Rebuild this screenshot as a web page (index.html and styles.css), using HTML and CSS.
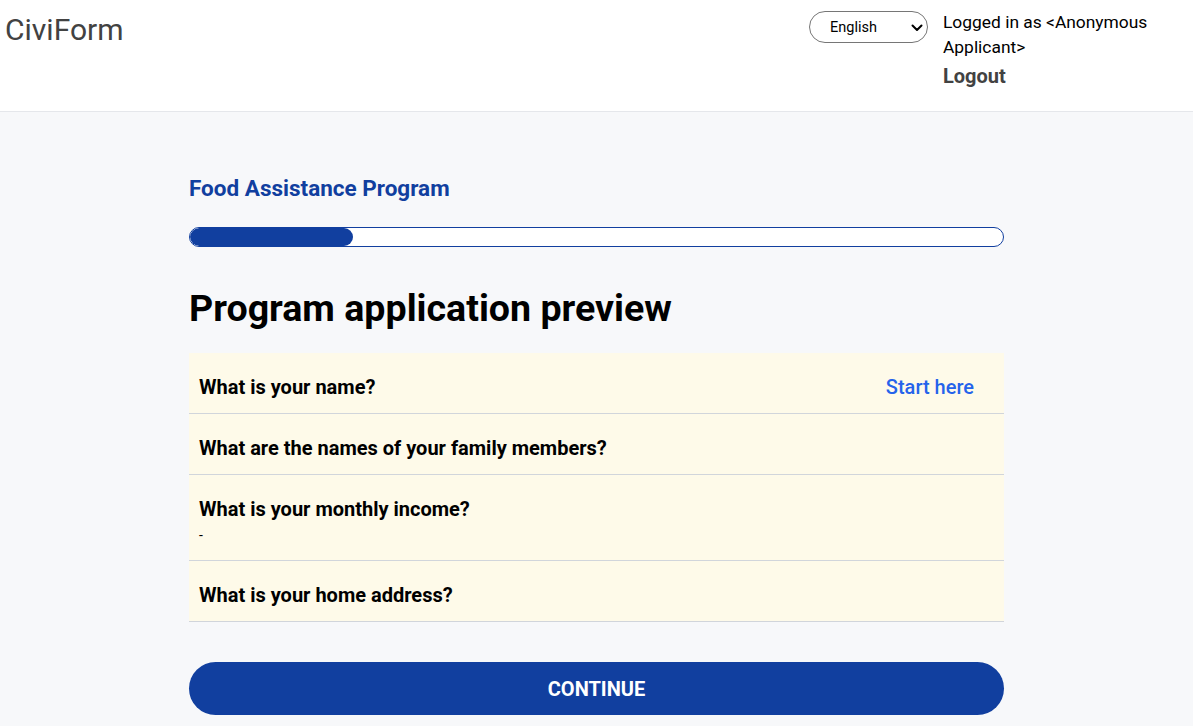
FILE: index.html
```html
<!DOCTYPE html>
<html lang="en">
<head>
<meta charset="utf-8">
<title>CiviForm</title>
<link rel="stylesheet" href="styles.css">
</head>
<body>
<header class="topbar">
  <div class="brand">CiviForm</div>
  <div class="topbar-right">
    <div class="lang">
      <span class="lang-label">English</span>
      <svg class="lang-chev" width="12" height="8" viewBox="0 0 12 8"><path d="M1.5 1.5 L6 6 L10.5 1.5" fill="none" stroke="#000" stroke-width="2" stroke-linecap="round" stroke-linejoin="round"/></svg>
    </div>
    <div class="user">
      <div class="user-name">Logged in as &lt;Anonymous Applicant&gt;</div>
      <a class="logout">Logout</a>
    </div>
  </div>
</header>
<main class="main">
  <div class="content">
    <div class="program">Food Assistance Program</div>
    <div class="progress"><div class="progress-fill" style="width:20%"></div></div>
    <h1 class="title">Program application preview</h1>
    <div class="questions">
      <div class="q">
        <div class="q-text">What is your name?</div>
        <a class="q-action">Start here</a>
      </div>
      <div class="q">
        <div class="q-text">What are the names of your family members?</div>
      </div>
      <div class="q">
        <div class="q-body">
          <div class="q-text">What is your monthly income?</div>
          <div class="q-answer">-</div>
        </div>
      </div>
      <div class="q">
        <div class="q-text">What is your home address?</div>
      </div>
    </div>
    <button class="continue">CONTINUE</button>
  </div>
</main>
</body>
</html>
```
FILE: styles.css
```css
* { box-sizing: border-box; }
html, body { margin: 0; padding: 0; }
body {
  font-family: Roboto, "Liberation Sans", Arial, sans-serif;
  background: #f7f8fa;
  color: #000;
  height: 726px;
  overflow: hidden;
}
.topbar {
  background: #fff;
  height: 112px;
  border-bottom: 1px solid #e5e7eb;
  display: flex;
  justify-content: space-between;
  align-items: flex-start;
  padding: 0 10px 0 5px;
}
.brand {
  font-size: 30px;
  line-height: 36px;
  color: #424242;
  margin-top: 12px;
}
.topbar-right {
  display: flex;
  align-items: flex-start;
  gap: 15px;
}
.lang {
  margin-top: 11px;
  width: 119px;
  height: 32px;
  border: 1px solid #767676;
  border-radius: 16px;
  display: flex;
  align-items: center;
  justify-content: space-between;
  padding: 0 4px 0 20px;
  font-size: 14.5px;
  color: #000;
}
.lang-chev { margin-top: 1px; }
.user {
  width: 240px;
  padding-top: 10px;
}
.user-name {
  font-size: 17.4px;
  line-height: 25px;
}
.logout {
  display: block;
  margin-top: 4px;
  font-size: 20px;
  font-weight: 700;
  line-height: 24px;
  color: #424242;
}
.main {
  display: flex;
  justify-content: center;
}
.content {
  width: 815px;
  padding-top: 62px;
}
.program {
  font-size: 22.5px;
  font-weight: 700;
  line-height: 28px;
  color: #113f9f;
}
.progress {
  margin-top: 25px;
  height: 20px;
  border: 1px solid #113f9f;
  border-radius: 10px;
  background: #fff;
  overflow: hidden;
}
.progress-fill {
  height: 100%;
  background: #113f9f;
  border-radius: 10px;
}
.title {
  margin: 37px 0 0;
  font-size: 37.6px;
  line-height: 48px;
  font-weight: 700;
}
.questions {
  margin-top: 21px;
}
.q {
  background: #fefae9;
  border-bottom: 1px solid #d1d5db;
  display: flex;
  justify-content: space-between;
  align-items: flex-start;
  padding: 20px 30px 12px 10px;
}
.q-text {
  font-size: 20px;
  font-weight: 700;
  line-height: 28px;
}
.q-answer {
  font-size: 14px;
  line-height: 25px;
}
.q-action {
  font-size: 20px;
  font-weight: 500;
  line-height: 28px;
  color: #2563eb;
}
.continue {
  display: block;
  width: 100%;
  margin-top: 40px;
  height: 53px;
  border: none;
  border-radius: 27px;
  background: #113f9f;
  color: #fff;
  font-family: Roboto, "Liberation Sans", Arial, sans-serif;
  font-size: 20px;
  font-weight: 700;
}
```
